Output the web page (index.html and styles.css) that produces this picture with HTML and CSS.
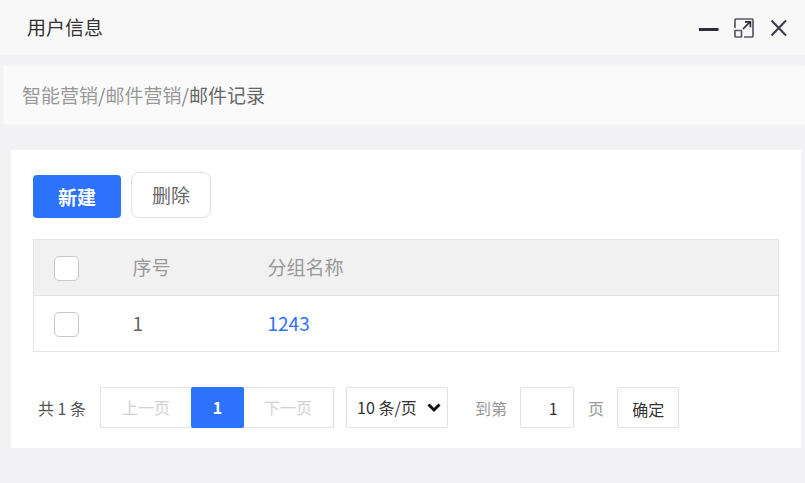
FILE: index.html
```html
<!DOCTYPE html>
<html lang="zh-CN">
<head>
    <meta charset="UTF-8">
    <meta name="viewport" content="width=device-width, initial-scale=1.0">
    <title>用户信息</title>
    <link rel="stylesheet" href="styles.css">
</head>
<body>
    <header class="title-bar">
        <h1>用户信息</h1>
        <div class="window-tools">
            <button type="button" aria-label="最小化">
                <svg width="20" height="20" viewBox="0 0 20 20"><path d="M0 11.500h19.500" stroke="#2e2d3c" stroke-width="3"/></svg>
            </button>
            <button type="button" aria-label="最大化">
                <svg width="20" height="20" viewBox="0 0 20 20" fill="none" stroke="#5a5868" stroke-width="1.700">
                    <path d="M1 10V2q0-1 1-1h16q1 0 1 1v16q0 1-1 1h-8"/>
                    <rect x="1" y="12.500" width="6.500" height="6.500" rx="0.500"/>
                    <path d="M9 11l7-7M11 3.800h5.400v5.400" stroke="#2e2d3c"/>
                </svg>
            </button>
            <button type="button" aria-label="关闭">
                <svg width="20" height="20" viewBox="0 0 20 20"><path d="M2.500 2.500l14.500 15M17 2.500L2.500 17.500" stroke="#3c3b49" stroke-width="2"/></svg>
            </button>
        </div>
    </header>

    <nav class="breadcrumb">
        <a href="#">智能营销</a>/<a href="#">邮件营销</a>/<span class="current">邮件记录</span>
    </nav>

    <main class="panel">
        <div class="actions">
            <button type="button" class="btn-add">新建</button>
            <button type="button" class="btn-delete">删除</button>
        </div>

        <table>
            <thead>
                <tr>
                    <th class="col-check"><input type="checkbox" aria-label="全选"></th>
                    <th class="col-index">序号</th>
                    <th>分组名称</th>
                </tr>
            </thead>
            <tbody>
                <tr>
                    <td class="col-check"><input type="checkbox" aria-label="选择第 1 条"></td>
                    <td>1</td>
                    <td><a href="#">1243</a></td>
                </tr>
            </tbody>
        </table>

        <div class="pagination">
            <span class="total">共 1 条</span>
            <div class="pages">
                <button type="button" class="page-step" disabled>上一页</button>
                <button type="button" class="page-current">1</button>
                <button type="button" class="page-step" disabled>下一页</button>
            </div>
            <div class="page-size">
                <select aria-label="每页条数">
                    <option>10 条/页</option>
                    <option>20 条/页</option>
                    <option>50 条/页</option>
                </select>
                <svg width="14" height="10" viewBox="0 0 14 10"><path d="M1.500 1.500L7 7l5.500-5.500" fill="none" stroke="#111" stroke-width="3"/></svg>
            </div>
            <label for="pageNo">到第</label>
            <input type="text" id="pageNo" class="page-input" value="1">
            <span class="unit">页</span>
            <button type="button" class="btn-go">确定</button>
        </div>
    </main>
</body>
</html>
```

FILE: styles.css
```css
* {
    box-sizing: border-box;
}
body {
    font-family: "Noto Sans CJK SC", sans-serif;
    font-size: 19px;
    line-height: 28px;
    background-color: #f2f2f4;
    color: #666;
    margin: 0;
}
button, input, select {
    font-family: inherit;
    font-size: 16px;
    line-height: 24px;
    margin: 0;
    padding: 0;
}
button {
    cursor: pointer;
}
a {
    text-decoration: none;
}

.title-bar {
    display: flex;
    justify-content: space-between;
    align-items: center;
    height: 55px;
    padding: 0 16px 0 27px;
    background-color: #f8f8f8;
}
.title-bar h1 {
    margin: 0;
    padding-bottom: 2px;
    font-size: 19px;
    font-weight: normal;
    color: #333;
}
.window-tools {
    display: flex;
    gap: 15px;
}
.window-tools button {
    display: flex;
    border: none;
    background: none;
}

.breadcrumb {
    margin: 11px 0 0 4px;
    padding: 15px 18px;
    background-color: #fafafa;
    box-shadow: 0 0 4px #fafafa;
    color: #888;
}
.breadcrumb a {
    color: #999;
}
.breadcrumb .current {
    color: #666;
}

.panel {
    margin: 26px 4px 0 11px;
    padding: 22px 22px 20px;
    background-color: #fff;
}
.actions {
    display: flex;
    align-items: flex-end;
    gap: 10px;
    margin-bottom: 21px;
}
.actions button {
    font-size: 19px;
    line-height: 28px;
    border-radius: 4px;
}
.actions .btn-add {
    height: 43px;
    padding: 0 25px;
    border: none;
    background-color: #2d72fa;
    color: #fff;
    font-weight: bold;
}
.actions .btn-delete {
    height: 46px;
    padding: 0 20px;
    border: 1px solid #e2e2e2;
    border-radius: 8px;
    background-color: #fff;
    color: #666;
}

table {
    width: 100%;
    border: 1px solid #e4e4e4;
    border-collapse: collapse;
    table-layout: fixed;
}
th, td {
    height: 56px;
    padding: 0 0 2px;
    text-align: left;
    font-weight: normal;
    border-bottom: 1px solid #e4e4e4;
}
th {
    background-color: #f1f1f1;
    color: #999;
}
td a {
    color: #2d72fa;
}
.col-check {
    width: 99px;
    padding-left: 20px;
}
.col-index {
    width: 135px;
}
table input {
    display: block;
    appearance: none;
    width: 25px;
    height: 25px;
    margin-top: 4px;
    border: 1px solid #c8c8c8;
    border-radius: 5px;
    background-color: #fff;
}
table input:checked {
    background-color: #2d72fa;
}

.pagination {
    display: flex;
    align-items: center;
    margin-top: 35px;
    padding-left: 5px;
    font-size: 16px;
    line-height: 24px;
    color: #999;
}
.pagination button, .page-input, .page-size select {
    height: 41px;
    border: 1px solid #e2e2e2;
    border-radius: 2px;
    background-color: #fff;
    color: #333;
}
.total {
    color: #555;
}
.pages {
    display: flex;
    margin: 0 12px 0 14px;
}
.pagination .page-step {
    padding: 0 21px 2px;
    border-radius: 0;
    color: #d2d2d2;
}
.pagination .page-step:last-child {
    padding-left: 20px;
}
.pagination .page-current {
    width: 53px;
    margin: 0 -1px;
    padding-bottom: 2px;
    border-color: #2d72fa;
    background-color: #2d72fa;
    color: #fff;
    font-weight: bold;
    z-index: 1;
}
.page-size {
    display: flex;
    position: relative;
    margin-right: 27px;
}
.page-size select {
    appearance: none;
    width: 102px;
    padding: 0 10px 2px;
}
.page-size svg {
    position: absolute;
    top: 16px;
    right: 7px;
    pointer-events: none;
}
.page-input {
    width: 54px;
    margin: 0 14px 0 13px;
    padding-left: 12px;
    text-align: center;
}
.pagination .btn-go {
    margin-left: 13px;
    padding: 2px 14px 0;
}
```
